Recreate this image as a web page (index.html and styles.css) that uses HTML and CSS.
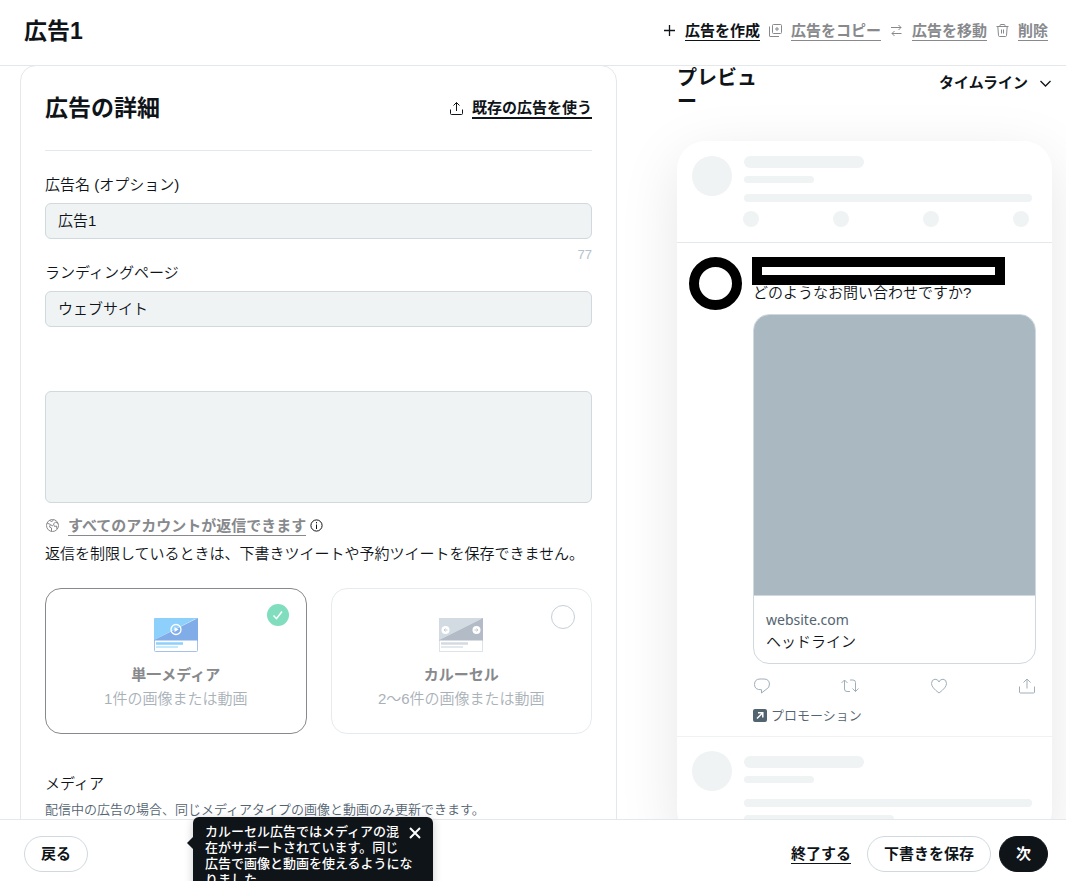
FILE: index.html
```html
<!DOCTYPE html>
<html lang="ja">
<head>
<meta charset="utf-8">
<meta name="viewport" content="width=device-width, initial-scale=1">
<title>広告1</title>
<link rel="stylesheet" href="styles.css">
</head>
<body>
<header class="topbar">
  <h1 class="title">広告1</h1>
  <nav class="toolbar">
    <svg class="icon-sm" viewBox="0 0 15 15"><path d="M7.500 2v11M2 7.500h11" stroke-width="1.300"/></svg>
    <a class="link" href="#create">広告を作成</a>
    <svg class="icon-sm muted" viewBox="0 0 15 15"><rect x="4.500" y="1.500" width="9" height="9" rx="1"/><path d="M9 4v4M7 6h4M1.500 3.500v9.500q0 .5.500.5h9"/></svg>
    <a class="link muted" href="#copy">広告をコピー</a>
    <svg class="icon-sm muted" viewBox="0 0 15 15"><path d="M2 4.500h10M9.500 2l2.500 2.500L9.500 7M12.500 10.500H3M5.500 8 3 10.500 5.500 13"/></svg>
    <a class="link muted" href="#move">広告を移動</a>
    <svg class="icon-sm muted" viewBox="0 0 15 15"><path d="M1.500 3.500h12M5 3.500v-1q0-1 1-1h3q1 0 1 1v1M2.800 3.500l.7 9q.1 1 1 1h6q.9 0 1-1l.7-9M6.500 6.500v4M8.500 6.500v4"/></svg>
    <a class="link muted" href="#delete">削除</a>
  </nav>
</header>

<main class="main">
  <form class="panel">
    <div class="panel-head">
      <h2 class="title">広告の詳細</h2>
      <div class="reuse">
        <svg class="icon-sm" viewBox="0 0 15 15"><path d="M1.500 8.500v4q0 1 1 1h10q1 0 1-1v-4M7.500 10V1.500M4.500 4.500l3-3 3 3"/></svg>
        <a class="link strong" href="#existing">既存の広告を使う</a>
      </div>
    </div>

    <label class="label" for="ad-name">広告名 (オプション)</label>
    <input class="field text-field" id="ad-name" type="text" value="広告1">
    <div class="counter">77</div>
    <label class="label" for="landing">ランディングページ</label>
    <select class="field" id="landing"><option>ウェブサイト</option></select>
    <textarea class="field area" aria-label="ツイート本文"></textarea>

    <div class="reply">
      <svg class="icon-sm muted" viewBox="0 0 15 15"><circle cx="7.500" cy="7.500" r="6"/><path d="M2 5l3.500 1.500L4.500 9 6.500 10v3.300M5 2.200 6.500 4l2-2.300M13 5.500 10.500 4 8.500 6l1 2.500 2-.5.500 3M6 7l2 1"/></svg>
      <a class="link muted" href="#reply">すべてのアカウントが返信できます</a>
      <svg class="icon-info" viewBox="0 0 13 13"><circle cx="6.500" cy="6.500" r="5.600"/><path d="M6.500 5.500V10M6.500 3v1.300"/></svg>
    </div>
    <p class="note">返信を制限しているときは、下書きツイートや予約ツイートを保存できません。</p>

    <div class="choices">
      <label class="choice selected">
        <input class="radio" type="radio" name="format" checked>
        <svg class="tick" viewBox="0 0 22 22"><path d="M6.500 11.500l3 3.200 5.500-7.200"/></svg>
        <svg class="art" viewBox="0 0 44 34"><rect x=".5" y=".5" width="43" height="33" rx="1" fill="#fff" stroke="#a6c0ec"/><path d="M0 1q0-1 1-1h42L0 22z" fill="#8dd0fb"/><path d="M44 0v22.500H0V22z" fill="#80ace8"/><circle cx="22" cy="11.500" r="5" fill="none" stroke="#fff" stroke-width="1.300"/><path d="M20.500 9v5l4-2.500z" fill="#fff"/><path d="M2 25.500h27" stroke="#8dd0fb" stroke-width="2.500"/><path d="M2 29h22" stroke="#c4e8fc" stroke-width="2"/></svg>
        <span class="choice-title">単一メディア</span>
        <span class="choice-desc">1件の画像または動画</span>
      </label>
      <label class="choice">
        <input class="radio" type="radio" name="format">
        <svg class="art" viewBox="0 0 44 34"><rect x=".5" y=".5" width="43" height="33" fill="#fff" stroke="#dde3e6"/><path d="M0 0h44L0 22z" fill="#d3dbe2"/><path d="M44 0v22.500H0V22z" fill="#b3bcc6"/><circle cx="6.500" cy="12" r="4" fill="#fff"/><circle cx="37.500" cy="12" r="4" fill="#fff"/><path d="M8.500 12H5M6.500 10.500 5 12l1.500 1.500M35.500 12H39M37.500 10.500 39 12l-1.500 1.500" fill="none" stroke="#c3cbd3"/><path d="M2 25.500h27" stroke="#d3dbe2" stroke-width="2.500"/><path d="M2 29h22" stroke="#e3e8ec" stroke-width="2"/></svg>
        <span class="choice-title">カルーセル</span>
        <span class="choice-desc">2〜6件の画像または動画</span>
      </label>
    </div>

    <h3 class="media-title">メディア</h3>
    <p class="media-note">配信中の広告の場合、同じメディアタイプの画像と動画のみ更新できます。</p>
  </form>

  <section class="preview">
    <div class="preview-head">
      <h2 class="preview-title">プレビュー</h2>
      <div class="placement">
        <select class="placement-select" aria-label="プレースメント"><option>タイムライン</option></select>
        <svg class="chevron" viewBox="0 0 13 13"><path d="M1.500 4l5 5 5-5"/></svg>
      </div>
    </div>
    <div class="phone">
      <div class="skeleton">
        <div class="blob"></div>
        <div class="bars">
          <div class="bar name"></div>
          <div class="bar handle"></div>
          <div class="bar text"></div>
          <div class="dots"><i class="dot"></i><i class="dot"></i><i class="dot"></i><i class="dot"></i></div>
        </div>
      </div>
      <article class="post">
        <div class="avatar"></div>
        <div class="post-body">
          <div class="redacted"></div>
          <p class="post-text">どのようなお問い合わせですか?</p>
          <div class="site-card">
            <div class="site-image"></div>
            <div class="site-info">
              <div class="site-url">website.com</div>
              <div>ヘッドライン</div>
            </div>
          </div>
          <div class="actions">
            <svg class="action" viewBox="0 0 18 18"><path d="M7 2h4q5 0 5.500 5 0 4-3.500 5.500L8.500 16v-3.300Q1.500 13 1.500 7.500 1.500 2 7 2z"/></svg>
            <svg class="action" viewBox="0 0 18 18"><path d="M.5 6 3.500 3l3 3M3.500 3v9q0 2.500 2.500 2.500h3M9 3h3q2.500 0 2.500 2.500v9M11.500 11.500l3 3 3-3"/></svg>
            <svg class="action" viewBox="0 0 18 18"><path d="M9 16Q1.500 10.500 1.500 6.500 1.500 2.500 5 2.200 8 2.200 9 5q1-2.800 4-2.800 3.500.3 3.500 4.300Q16.500 10.500 9 16z"/></svg>
            <svg class="action" viewBox="0 0 18 18"><path d="M1.500 9.500V15q0 1 1 1h13q1 0 1-1V9.500M9 11.500V2M5.500 5.500 9 2l3.500 3.500"/></svg>
          </div>
          <div class="promo">
            <svg class="promo-icon" viewBox="0 0 14 14"><rect width="14" height="13" rx="2" fill="#536471"/><path d="M4 9.500 9.500 4M5 3.700h4.800v4.800" fill="none" stroke="#fff" stroke-width="1.500"/></svg>
            <span>プロモーション</span>
          </div>
        </div>
      </article>
      <div class="skeleton next">
        <div class="blob"></div>
        <div class="bars lower">
          <div class="bar name"></div>
          <div class="bar handle"></div>
          <div class="bar text"></div>
          <div class="bar short"></div>
        </div>
      </div>
    </div>
  </section>
</main>

<footer class="footer">
  <button class="button" type="button">戻る</button>
  <div class="footer-actions">
    <a class="link" href="#exit">終了する</a>
    <div class="pair">
      <button class="button" type="button">下書きを保存</button>
      <button class="button primary" type="button">次</button>
    </div>
  </div>
  <div class="tooltip" role="tooltip">
    <button class="close" type="button" aria-label="閉じる"><svg class="close-icon" viewBox="0 0 12 12"><path d="M1 1l10 10M11 1 1 11"/></svg></button>
    カルーセル広告ではメディアの混在がサポートされています。同じ広告で画像と動画を使えるようになりました。
  </div>
</footer>
</body>
</html>
```

FILE: styles.css
```css
* { box-sizing: border-box; }
body {
  margin: 0;
  height: 100vh;
  display: flex;
  flex-direction: column;
  overflow: hidden;
  background: #fff;
  color: #0f1419;
  font: 350 15px/22px "Liberation Sans", "Noto Sans CJK JP", sans-serif;
}
h1, h2, h3, p { margin: 0; }
svg { display: block; flex: none; }
button, input, select, textarea { font: inherit; color: inherit; }

.topbar {
  display: flex;
  align-items: center;
  justify-content: space-between;
  flex: none;
  height: 66px;
  padding: 0 18px 4px 24px;
  border-bottom: 1px solid #e4e8eb;
}
.title { font-size: 23px; line-height: 28px; font-weight: 700; }
.toolbar, .reuse, .reply { display: flex; align-items: center; gap: 8px; }
.link {
  padding-top: 2px;
  color: #0f1419;
  font-weight: 700;
  line-height: 18px;
  text-decoration: none;
  border-bottom: 1px solid currentColor;
  white-space: nowrap;
}
.link.strong { border-bottom-width: 2px; }
.link.muted, .muted { color: #87898c; }
.icon-sm { width: 15px; height: 15px; fill: none; stroke: currentColor; stroke-width: 1; }

.main {
  flex: 1;
  min-height: 0;
  overflow: hidden;
  display: grid;
  grid-template-columns: minmax(0, 1fr) 375px;
  align-items: start;
  gap: 60px;
  padding: 0 14px 0 20px;
}
.panel {
  margin-top: -1px;
  padding: 0 24px 24px;
  border: 1px solid #e4e8eb;
  border-radius: 16px;
}
.panel-head {
  display: flex;
  align-items: center;
  justify-content: space-between;
  height: 85px;
  margin-bottom: 24px;
  border-bottom: 1px solid #e4e8eb;
}
.label { display: block; margin-bottom: 8px; line-height: 20px; }
.field {
  display: block;
  width: 100%;
  height: 36px;
  padding: 0 12px;
  border: 1px solid #cfd9de;
  border-radius: 6px;
  background: #eff3f4;
  appearance: none;
  outline: none;
  resize: none;
}
.text-field { padding-bottom: 3px; }
.counter { margin-top: 8px; font-size: 13px; line-height: 16px; text-align: right; color: #b3c3cd; }
.area { height: 112px; margin: 64px 0 8px; }
.reply { height: 28px; }
.icon-info { width: 13px; height: 13px; margin-left: -4px; fill: none; stroke: #0f1419; }
.note { line-height: 30px; margin-bottom: 19px; }

.choices { display: grid; grid-template-columns: 1fr 1fr; gap: 24px; }
.choice {
  position: relative;
  display: flex;
  flex-direction: column;
  align-items: center;
  padding: 29px 16px 22px;
  border: 1px solid #e7ebed;
  border-radius: 16px;
  line-height: 24px;
}
.choice.selected { border-color: #87898c; }
.radio {
  position: absolute;
  top: 16px;
  right: 16px;
  width: 24px;
  height: 24px;
  margin: 0;
  appearance: none;
  border: 1px solid #c3d0d9;
  border-radius: 50%;
}
.selected .radio { top: 15px; right: 17px; width: 22px; height: 22px; border: 0; background: #80debe; }
.tick { position: absolute; top: 15px; right: 17px; width: 22px; height: 22px; fill: none; stroke: #fff; stroke-width: 1.5; pointer-events: none; }
.art { width: 44px; height: 34px; margin-bottom: 11px; }
.choice-title { font-weight: 700; color: #87898c; }
.choice-desc { color: #a9b1b8; }
.media-title { margin-top: 36px; font-size: 15px; font-weight: 350; line-height: 28px; }
.media-note { font-size: 13px; line-height: 24px; color: #536471; }

.preview-head { display: flex; align-items: flex-start; justify-content: space-between; height: 75px; }
.preview-title { max-width: 4em; font-size: 20px; line-height: 24px; font-weight: 700; line-break: anywhere; }
.placement { display: flex; align-items: center; gap: 9px; padding-top: 6px; }
.placement-select { appearance: none; padding: 0; border: 0; background: none; font-weight: 700; }
.chevron { width: 13px; height: 13px; fill: none; stroke: #0f1419; stroke-width: 1.3; }
.phone {
  background: #fff;
  border-radius: 28px;
  box-shadow: 0 16px 60px rgba(0, 0, 0, 0.1);
}
.skeleton { display: flex; gap: 12px; padding: 15px 20px 15px 15px; }
.skeleton.next { padding-top: 14px; }
.blob { flex: none; width: 40px; height: 40px; border-radius: 50%; background: #eff3f4; }
.bars { flex: 1; }
.bars.lower { padding-top: 5px; }
.bar { height: 8px; border-radius: 6px; background: #eff3f4; }
.bar.name { width: 120px; height: 12px; margin-bottom: 8px; }
.bar.handle { width: 70px; height: 7px; margin-bottom: 11px; }
.lower .handle { margin-bottom: 16px; }
.bar.short { width: 150px; margin-top: 8px; }
.dots { display: flex; justify-content: space-between; margin: 9px 3px 0 -1px; }
.dot { width: 16px; height: 16px; border-radius: 50%; background: #eff3f4; }

.post {
  display: flex;
  gap: 10px;
  padding: 14px 16px 10px 12px;
  border-top: 1px solid #e4e8eb;
  border-bottom: 1px solid #eff1f2;
}
.avatar { flex: none; width: 53px; height: 53px; border: 10px solid #000; border-radius: 50%; }
.post-body { flex: 1; min-width: 0; }
.redacted { width: 253px; height: 28px; border: 10px solid #000; }
.post-text { padding-left: 1px; line-height: 16px; }
.site-card { margin: 13px 0 13px 1px; border: 1px solid #cfd9de; border-radius: 16px; overflow: hidden; }
.site-image { aspect-ratio: 1; background: #aab8c2; border-bottom: 1px solid #cfd9de; }
.site-info { padding: 13px 12px 10px; }
.site-url { color: #536471; font-family: "Noto Sans", sans-serif; font-size: 14px; font-weight: 400; }
.actions { display: flex; justify-content: space-between; padding-left: 1px; }
.action { width: 18px; height: 18px; fill: none; stroke: #9fafba; }
.promo { display: flex; align-items: center; gap: 4px; margin-top: 11px; padding-left: 1px; font-size: 13px; line-height: 20px; color: #536471; }
.promo-icon { width: 14px; height: 14px; }

.footer {
  position: relative;
  display: flex;
  justify-content: space-between;
  flex: none;
  height: 62px;
  padding: 16px 18px 0 24px;
  border-top: 1px solid #e4e8eb;
  background: #fff;
}
.footer-actions { display: flex; align-items: flex-start; gap: 16px; }
.footer-actions .link { margin-top: 7px; }
.pair { display: flex; gap: 8px; }
.button {
  height: 36px;
  padding: 0 16px;
  border: 1px solid #cfd9de;
  border-radius: 18px;
  background: #fff;
  font-weight: 700;
}
.button.primary { border-color: #0f1419; background: #0f1419; color: #fff; }
.tooltip {
  position: absolute;
  left: 193px;
  top: -3px;
  width: 240px;
  padding: 7px 12px;
  border-radius: 6px;
  background: #0f1419;
  color: #fff;
  font-size: 13px;
  font-weight: 500;
  line-height: 16px;
  box-shadow: 0 2px 10px rgba(0, 0, 0, 0.2);
}
.tooltip::before {
  content: "";
  position: absolute;
  left: -6px;
  top: 20px;
  border: 6px solid transparent;
  border-left-width: 0;
  border-right-color: #0f1419;
}
.close { float: right; width: 18px; height: 32px; padding: 0 0 14px 8px; border: 0; background: none; }
.close-icon { width: 12px; height: 12px; margin-left: -2px; fill: none; stroke: #fff; stroke-width: 2; }
```
